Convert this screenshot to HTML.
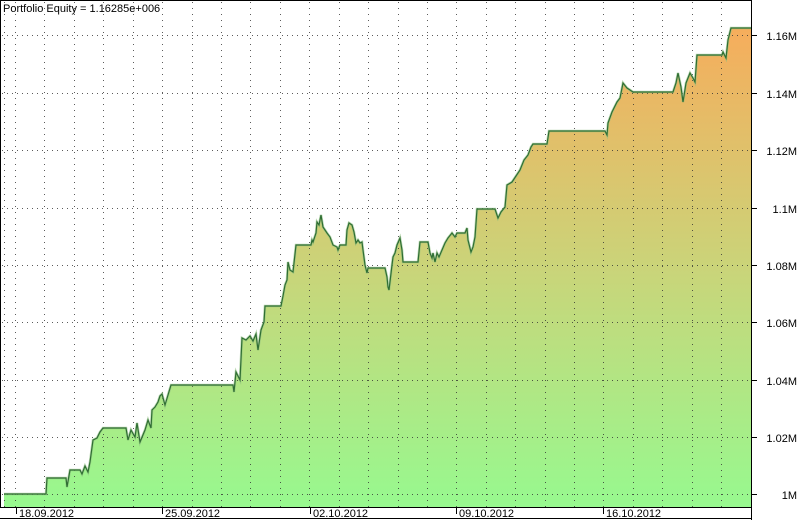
<!DOCTYPE html>
<html><head><meta charset="utf-8"><style>
html,body{margin:0;padding:0;background:#fff;}
svg{display:block;}
text{font-family:"Liberation Sans",Arial,sans-serif;font-size:11px;fill:#000;}
</style></head><body>
<svg width="800" height="520" viewBox="0 0 800 520" xmlns="http://www.w3.org/2000/svg">
<defs>
<linearGradient id="g" x1="0" y1="28" x2="0" y2="507" gradientUnits="userSpaceOnUse">
<stop offset="0" stop-color="#f6ad5c"/>
<stop offset="0.5" stop-color="#cad479"/>
<stop offset="1" stop-color="#97f98f"/>
</linearGradient>
</defs>
<rect width="800" height="520" fill="#fff"/>
<path id="eq" d="M4,494 L46,494 L47,478 L66,478 L67,487 L70,470 L80,470 L82,474 L85,466 L88,472 L90,462 L93,440 L97,438 L100,432 L103,428 L126,428 L128,440 L131,430 L135,437 L137,423 L140,442 L145,430 L148,420 L151,428 L152,410 L155,407 L158,402 L160,396 L162,394 L165,405 L168,395 L171,385 L233,385 L234,392 L236,372 L240,380 L242,338 L246,340 L250,336 L253,341 L256,334 L258,350 L261,330 L264,322 L265,306 L281,306 L283,296 L285,285 L287,280 L288,262 L290,270 L293,272 L296,245 L311,245 L312,240 L313,242 L316,233 L317,222 L319,225 L321,215 L323,227 L325,230 L327,233 L330,237 L333,245 L337,247 L338,250 L340,245 L346,245 L347,230 L349,223 L352,225 L354,232 L356,243 L358,240 L360,243 L362,242 L363,250 L365,265 L367,273 L368,268 L385,268 L387,277 L388,287 L389,290 L392,265 L393,257 L395,253 L397,245 L400,238 L402,250 L403,262 L418,262 L420,242 L428,242 L430,253 L432,258 L433,253 L435,262 L437,253 L439,257 L442,250 L445,243 L448,238 L452,233 L455,237 L457,233 L465,233 L467,228 L468,240 L471,252 L473,247 L475,237 L477,209 L495,209 L498,218 L501,212 L505,207 L507,185 L512,182 L516,176 L520,170 L524,160 L528,155 L531,147 L533,144 L547,144 L549,131 L605,131 L607,135 L608,123 L612,112 L617,102 L620,98 L623,83 L627,88 L630,90 L633,92 L673,92 L676,83 L678,73 L681,87 L683,102 L686,83 L688,78 L690,73 L693,78 L695,82 L697,55 L722,55 L723,52 L726,58 L728,40 L731,28 L751,28" fill="none"/>
<path d="M4,494 L46,494 L47,478 L66,478 L67,487 L70,470 L80,470 L82,474 L85,466 L88,472 L90,462 L93,440 L97,438 L100,432 L103,428 L126,428 L128,440 L131,430 L135,437 L137,423 L140,442 L145,430 L148,420 L151,428 L152,410 L155,407 L158,402 L160,396 L162,394 L165,405 L168,395 L171,385 L233,385 L234,392 L236,372 L240,380 L242,338 L246,340 L250,336 L253,341 L256,334 L258,350 L261,330 L264,322 L265,306 L281,306 L283,296 L285,285 L287,280 L288,262 L290,270 L293,272 L296,245 L311,245 L312,240 L313,242 L316,233 L317,222 L319,225 L321,215 L323,227 L325,230 L327,233 L330,237 L333,245 L337,247 L338,250 L340,245 L346,245 L347,230 L349,223 L352,225 L354,232 L356,243 L358,240 L360,243 L362,242 L363,250 L365,265 L367,273 L368,268 L385,268 L387,277 L388,287 L389,290 L392,265 L393,257 L395,253 L397,245 L400,238 L402,250 L403,262 L418,262 L420,242 L428,242 L430,253 L432,258 L433,253 L435,262 L437,253 L439,257 L442,250 L445,243 L448,238 L452,233 L455,237 L457,233 L465,233 L467,228 L468,240 L471,252 L473,247 L475,237 L477,209 L495,209 L498,218 L501,212 L505,207 L507,185 L512,182 L516,176 L520,170 L524,160 L528,155 L531,147 L533,144 L547,144 L549,131 L605,131 L607,135 L608,123 L612,112 L617,102 L620,98 L623,83 L627,88 L630,90 L633,92 L673,92 L676,83 L678,73 L681,87 L683,102 L686,83 L688,78 L690,73 L693,78 L695,82 L697,55 L722,55 L723,52 L726,58 L728,40 L731,28 L751,28 L751,507 L4,507 Z" fill="url(#g)"/>
<g stroke="#333" stroke-width="1" stroke-dasharray="1 5" opacity="0.8">
<line x1="4.5" y1="2" x2="4.5" y2="507"/>
<line x1="15.5" y1="2" x2="15.5" y2="507"/>
<line x1="44.5" y1="2" x2="44.5" y2="507"/>
<line x1="74.5" y1="2" x2="74.5" y2="507"/>
<line x1="103.5" y1="2" x2="103.5" y2="507"/>
<line x1="133.5" y1="2" x2="133.5" y2="507"/>
<line x1="162.5" y1="2" x2="162.5" y2="507"/>
<line x1="192.5" y1="2" x2="192.5" y2="507"/>
<line x1="221.5" y1="2" x2="221.5" y2="507"/>
<line x1="250.5" y1="2" x2="250.5" y2="507"/>
<line x1="280.5" y1="2" x2="280.5" y2="507"/>
<line x1="309.5" y1="2" x2="309.5" y2="507"/>
<line x1="339.5" y1="2" x2="339.5" y2="507"/>
<line x1="368.5" y1="2" x2="368.5" y2="507"/>
<line x1="398.5" y1="2" x2="398.5" y2="507"/>
<line x1="427.5" y1="2" x2="427.5" y2="507"/>
<line x1="456.5" y1="2" x2="456.5" y2="507"/>
<line x1="486.5" y1="2" x2="486.5" y2="507"/>
<line x1="515.5" y1="2" x2="515.5" y2="507"/>
<line x1="545.5" y1="2" x2="545.5" y2="507"/>
<line x1="574.5" y1="2" x2="574.5" y2="507"/>
<line x1="603.5" y1="2" x2="603.5" y2="507"/>
<line x1="633.5" y1="2" x2="633.5" y2="507"/>
<line x1="662.5" y1="2" x2="662.5" y2="507"/>
<line x1="692.5" y1="2" x2="692.5" y2="507"/>
<line x1="721.5" y1="2" x2="721.5" y2="507"/>
</g>
<g stroke="#333" stroke-width="1" stroke-dasharray="1 4" opacity="0.8">
<line x1="2" y1="35.5" x2="751" y2="35.5"/>
<line x1="2" y1="93.5" x2="751" y2="93.5"/>
<line x1="2" y1="150.5" x2="751" y2="150.5"/>
<line x1="2" y1="208.5" x2="751" y2="208.5"/>
<line x1="2" y1="265.5" x2="751" y2="265.5"/>
<line x1="2" y1="322.5" x2="751" y2="322.5"/>
<line x1="2" y1="380.5" x2="751" y2="380.5"/>
<line x1="2" y1="437.5" x2="751" y2="437.5"/>
<line x1="2" y1="494.5" x2="751" y2="494.5"/>
</g>
<use href="#eq" stroke="#8fbf80" stroke-width="2.6" opacity="0.6"/>
<use href="#eq" stroke="#2f6e33" stroke-width="1.2"/>
<g stroke="#000" stroke-width="1" fill="none">
<rect x="0.5" y="0.5" width="751" height="507"/>
<line x1="751.5" y1="507" x2="751.5" y2="520"/>
<line x1="0" y1="518.5" x2="752" y2="518.5"/>
<line x1="751" y1="35.5" x2="757" y2="35.5"/>
<line x1="751" y1="93.5" x2="757" y2="93.5"/>
<line x1="751" y1="150.5" x2="757" y2="150.5"/>
<line x1="751" y1="208.5" x2="757" y2="208.5"/>
<line x1="751" y1="265.5" x2="757" y2="265.5"/>
<line x1="751" y1="322.5" x2="757" y2="322.5"/>
<line x1="751" y1="380.5" x2="757" y2="380.5"/>
<line x1="751" y1="437.5" x2="757" y2="437.5"/>
<line x1="751" y1="494.5" x2="757" y2="494.5"/>
<line x1="16.5" y1="508" x2="16.5" y2="514"/>
<line x1="162.5" y1="508" x2="162.5" y2="514"/>
<line x1="310.5" y1="508" x2="310.5" y2="514"/>
<line x1="456.5" y1="508" x2="456.5" y2="514"/>
<line x1="603.5" y1="508" x2="603.5" y2="514"/>
</g>
<text x="3" y="12">Portfolio Equity = 1.16285e+006</text>
<g text-anchor="end">
<text x="797" y="40">1.16M</text>
<text x="797" y="98">1.14M</text>
<text x="797" y="155">1.12M</text>
<text x="797" y="213">1.1M</text>
<text x="797" y="270">1.08M</text>
<text x="797" y="327">1.06M</text>
<text x="797" y="385">1.04M</text>
<text x="797" y="442">1.02M</text>
<text x="797" y="499">1M</text>
</g>
<text x="19" y="517">18.09.2012</text>
<text x="165" y="517">25.09.2012</text>
<text x="313" y="517">02.10.2012</text>
<text x="459" y="517">09.10.2012</text>
<text x="606" y="517">16.10.2012</text>
</svg>
</body></html>
